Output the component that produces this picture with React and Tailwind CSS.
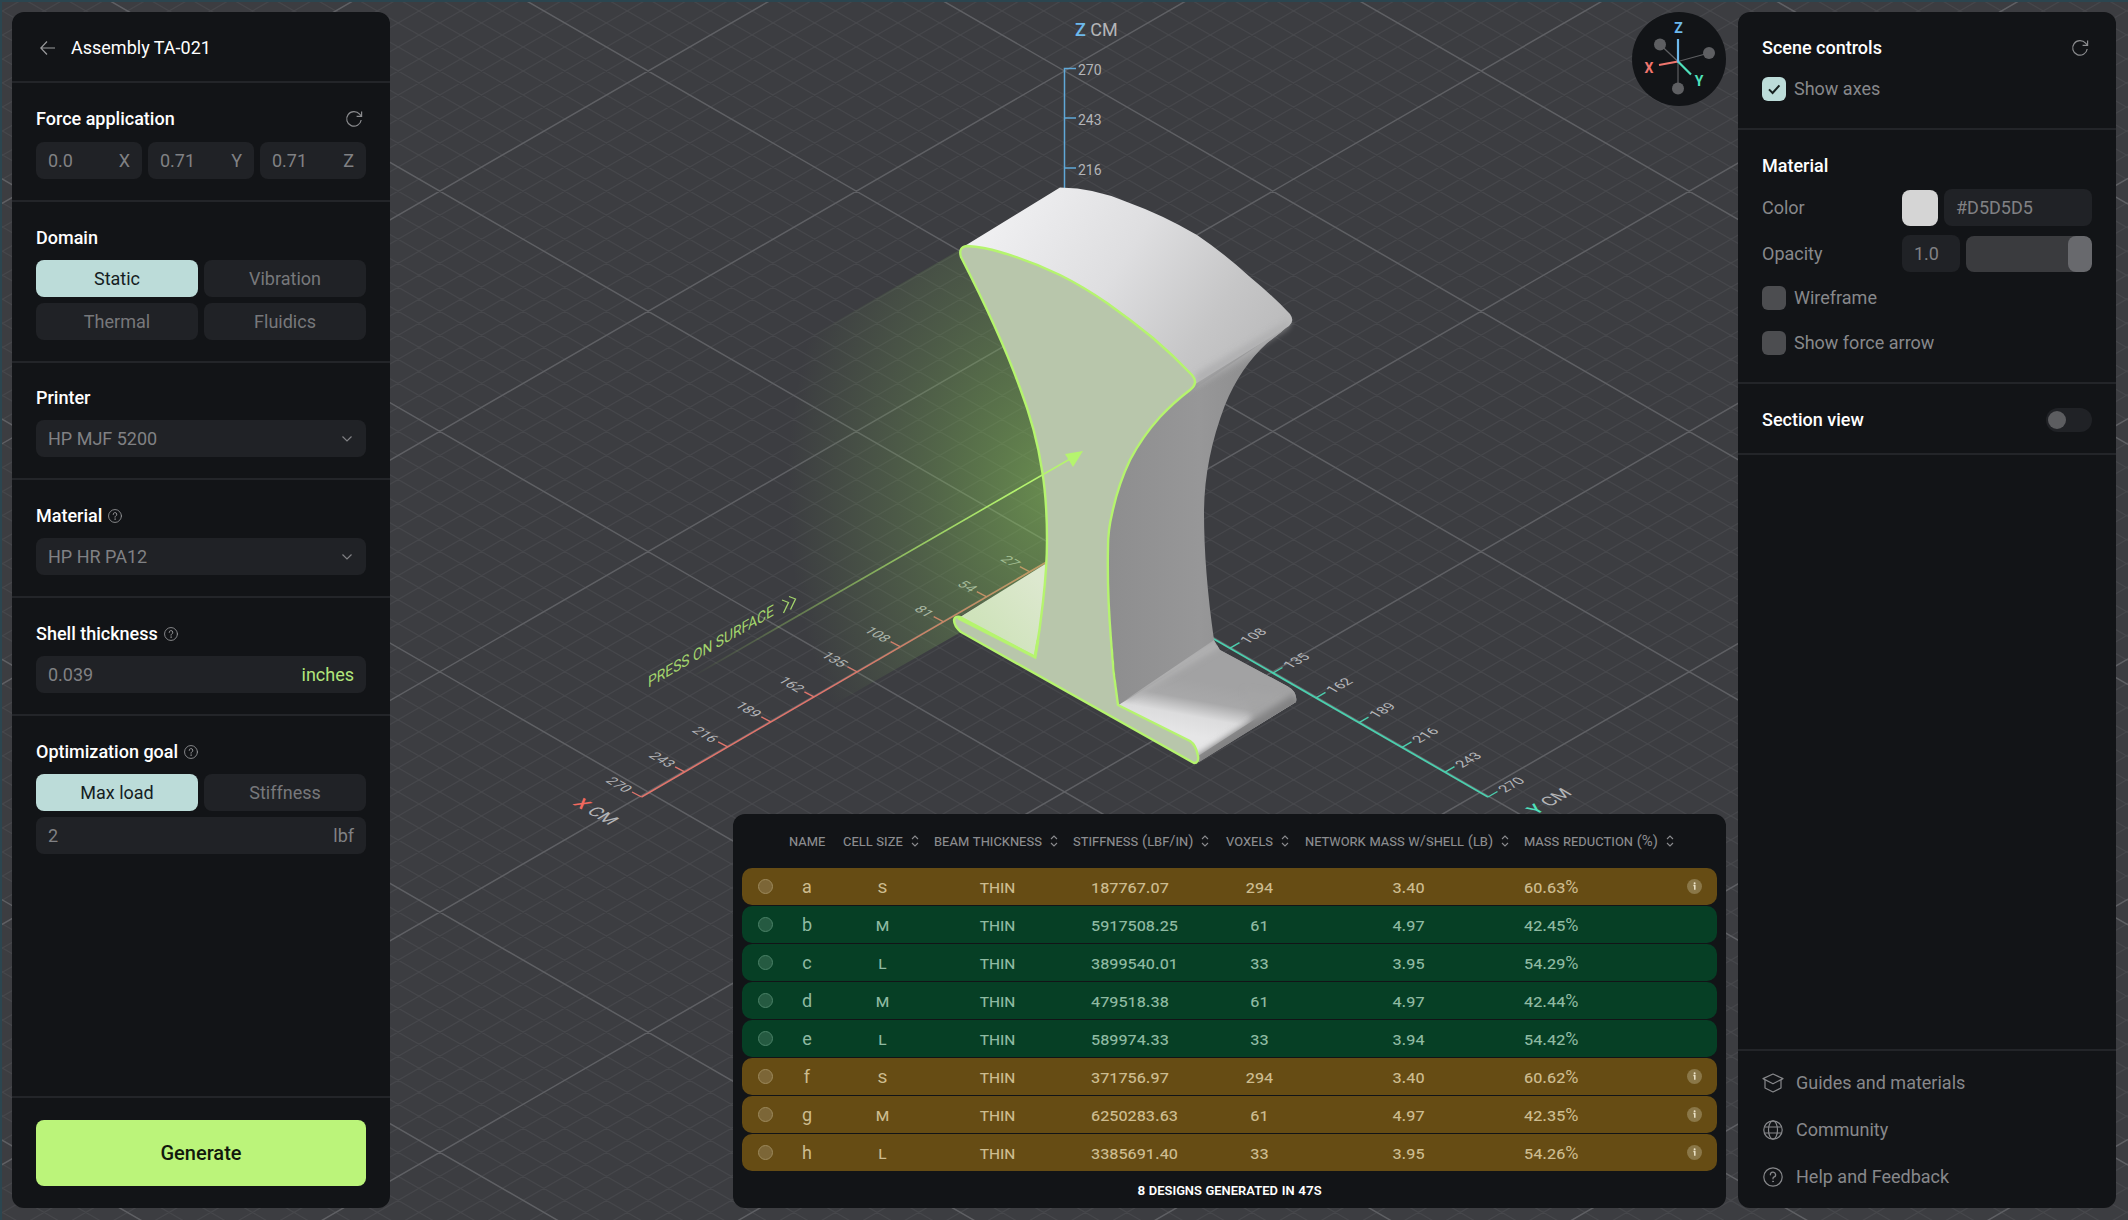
import React, { useState } from 'react';

const AXIS_STEPS = [27, 54, 81, 108, 135, 162, 189, 216, 243, 270];

const COLUMNS = [
  { label: 'Name', sortable: false },
  { label: 'Cell size', sortable: true },
  { label: 'Beam thickness', sortable: true },
  { label: 'Stiffness (lbf/in)', sortable: true },
  { label: 'Voxels', sortable: true },
  { label: 'Network mass w/shell (lb)', sortable: true },
  { label: 'Mass reduction (%)', sortable: true },
];

const DESIGNS = [
  { name: 'a', cell: 'S', beam: 'THIN', stiffness: '187767.07', voxels: 294, mass: '3.40', reduction: '60.63%', warn: true },
  { name: 'b', cell: 'M', beam: 'THIN', stiffness: '5917508.25', voxels: 61, mass: '4.97', reduction: '42.45%', warn: false },
  { name: 'c', cell: 'L', beam: 'THIN', stiffness: '3899540.01', voxels: 33, mass: '3.95', reduction: '54.29%', warn: false },
  { name: 'd', cell: 'M', beam: 'THIN', stiffness: '479518.38', voxels: 61, mass: '4.97', reduction: '42.44%', warn: false },
  { name: 'e', cell: 'L', beam: 'THIN', stiffness: '589974.33', voxels: 33, mass: '3.94', reduction: '54.42%', warn: false },
  { name: 'f', cell: 'S', beam: 'THIN', stiffness: '371756.97', voxels: 294, mass: '3.40', reduction: '60.62%', warn: true },
  { name: 'g', cell: 'M', beam: 'THIN', stiffness: '6250283.63', voxels: 61, mass: '4.97', reduction: '42.35%', warn: true },
  { name: 'h', cell: 'L', beam: 'THIN', stiffness: '3385691.40', voxels: 33, mass: '3.95', reduction: '54.26%', warn: true },
];

// Two families of parallel lines through (1064.5, 71), drawn as one path
function gridPath(spacing, skipEvery) {
  const slope = 0.577;
  let d = '';
  for (let i = -110; i < 110; i++) {
    if (skipEvery && i % skipEvery === 0) continue;
    const c = 71 + i * spacing;
    d += `M0 ${(c - 1064.5 * slope).toFixed(1)}L2128 ${(c + 1063.5 * slope).toFixed(1)}`;
    d += `M0 ${(c + 1064.5 * slope).toFixed(1)}L2128 ${(c - 1063.5 * slope).toFixed(1)}`;
  }
  return d;
}

const MAJOR_GRID = gridPath(240.3, 0);
const MINOR_GRID = gridPath(24.03, 10);

const FRONT_FACE =
  'M961 257Q958 247 967 246Q984 247 1000 252Q1031 261 1060 275Q1084 287 1107 303Q1131 320 1153 338Q1174 356 1192 375Q1199 383 1190 390' +
  'Q1174 402 1160 417Q1142 437 1130 460Q1118 485 1112 514Q1108 530 1108 547Q1107 590 1111 640Q1113 673 1118 705' +
  'L1190 741Q1196 745 1198 756Q1199 763 1194 763L961 632Q954 626 954 620Q955 616 960 617L1035 657Q1040 630 1043 602' +
  'Q1047 567 1047 540Q1047 500 1042 470Q1036 430 1020 388Q1000 333 961 257Z';

function RefreshIcon() {
  return (
    <svg width="18" height="18" viewBox="0 0 18 18" fill="none" stroke="currentColor" strokeWidth="1.2" aria-hidden="true">
      <path d="M16.2 10A7.3 7.3 0 1 1 14.6 4.2L16.6 6.4" />
      <path d="M16.6 1.4V6.4H11.6" />
    </svg>
  );
}

function HelpIcon({ className }) {
  return (
    <svg className={className} viewBox="0 0 20 20" fill="none" stroke="currentColor" strokeLinecap="round" aria-hidden="true">
      <circle cx="10" cy="10" r="9.2" strokeWidth="1.2" />
      <path d="M7.4 7.8A2.6 2.6 0 1 1 10.8 10.2Q10 10.6 10 11.8" strokeWidth="1.3" />
      <circle cx="10" cy="14.4" r="0.5" strokeWidth="0.8" fill="currentColor" />
    </svg>
  );
}

function SectionTitle({ children, help, action }) {
  return (
    <div className="flex items-center justify-between">
      <h2 className="flex items-center gap-1.5 text-lg/[22px] font-medium text-white">
        {children}
        {help && <HelpIcon className="w-3.5 h-3.5 text-[#9a9b9d]" />}
      </h2>
      {action}
    </div>
  );
}

function Field({ id, unit, unitClass, defaultValue, label }) {
  return (
    <div className="flex items-center h-[37px] px-3 rounded-lg bg-[#202226] min-w-0 flex-1">
      <input
        id={id}
        aria-label={label}
        defaultValue={defaultValue}
        className="w-full min-w-0 bg-transparent outline-none text-[#808184]"
      />
      {unit && <label htmlFor={id} className={unitClass || 'text-[#808184]'}>{unit}</label>}
    </div>
  );
}

function Select({ label, options }) {
  return (
    <div className="relative flex">
      <select aria-label={label} className="appearance-none w-full h-[37px] px-3 rounded-lg bg-[#202226] text-[#808184] outline-none">
        {options.map((o) => <option key={o}>{o}</option>)}
      </select>
      <svg className="absolute right-3.5 top-4 pointer-events-none text-[#808184]" width="10" height="6" viewBox="0 0 10 6" fill="none" stroke="currentColor" strokeWidth="1.2" aria-hidden="true">
        <path d="M0.5 0.5L5 5L9.5 0.5" />
      </svg>
    </div>
  );
}

function Segmented({ options, value, onChange }) {
  return (
    <div className="grid grid-cols-2 gap-1.5">
      {options.map((o) => (
        <button
          key={o}
          type="button"
          aria-pressed={value === o}
          onClick={() => onChange(o)}
          className={`h-[37px] rounded-lg ${value === o ? 'bg-[#bcdcd9] text-[#14201f]' : 'bg-[#202226] text-[#77787b]'}`}
        >
          {o}
        </button>
      ))}
    </div>
  );
}

function Checkbox({ label, checked }) {
  return (
    <label className="flex items-center gap-2 h-6 text-[#87888b]">
      <span className="relative flex">
        <input type="checkbox" defaultChecked={checked} className="peer appearance-none w-6 h-6 rounded-md bg-[#4c4d50] checked:bg-[#bcdcd9]" />
        <svg className="absolute inset-0 hidden peer-checked:block pointer-events-none" width="24" height="24" viewBox="0 0 24 24" fill="none" stroke="#16201f" strokeWidth="2" aria-hidden="true">
          <path d="M7 12.4L10.6 16L17.4 8.4" />
        </svg>
      </span>
      {label}
    </label>
  );
}

function Scene() {
  return (
    <div className="absolute inset-0 border-t-2 border-l-2 border-[#2b4650] overflow-hidden">
      <svg className="w-full h-full" viewBox="2 2 2126 1218" preserveAspectRatio="xMidYMid slice" role="img" aria-label="Part preview">
        <defs>
          <linearGradient id="topFace" x1="1000" y1="200" x2="1250" y2="370" gradientUnits="userSpaceOnUse">
            <stop offset="0" stopColor="#f0f0f2" />
            <stop offset="0.45" stopColor="#dedee0" />
            <stop offset="0.8" stopColor="#c6c6c7" />
            <stop offset="1" stopColor="#bcbcbd" />
          </linearGradient>
          <linearGradient id="sideFace" x1="1105" y1="0" x2="1295" y2="0" gradientUnits="userSpaceOnUse">
            <stop offset="0" stopColor="#8d8d8e" />
            <stop offset="0.5" stopColor="#979798" />
            <stop offset="0.75" stopColor="#8f8f90" />
            <stop offset="1" stopColor="#a9a9aa" />
          </linearGradient>
          <linearGradient id="lip" x1="1232" y1="342" x2="1246" y2="368" gradientUnits="userSpaceOnUse">
            <stop offset="0" stopColor="#c2c2c3" />
            <stop offset="0.6" stopColor="#a6a6a7" />
            <stop offset="1" stopColor="#969697" stopOpacity="0" />
          </linearGradient>
          <linearGradient id="foot" x1="1204" y1="682" x2="1194" y2="736" gradientUnits="userSpaceOnUse">
            <stop offset="0" stopColor="#a2a2a3" />
            <stop offset="0.35" stopColor="#a8a8a9" />
            <stop offset="0.65" stopColor="#dcdcdd" />
            <stop offset="1" stopColor="#e6e6e7" />
          </linearGradient>
          <linearGradient id="footLeft" x1="1040" y1="580" x2="985" y2="630" gradientUnits="userSpaceOnUse">
            <stop offset="0" stopColor="#dde8cf" />
            <stop offset="1" stopColor="#cfe3bb" />
          </linearGradient>
          <radialGradient id="glow" cx="0" cy="0" r="1" gradientUnits="userSpaceOnUse" gradientTransform="translate(1052 490) scale(265 390)">
            <stop offset="0" stopColor="#92d65c" stopOpacity="0.52" />
            <stop offset="0.35" stopColor="#8acb5a" stopOpacity="0.34" />
            <stop offset="0.7" stopColor="#7fb25c" stopOpacity="0.18" />
            <stop offset="1" stopColor="#7fb25c" stopOpacity="0" />
          </radialGradient>
          <linearGradient id="force" x1="690" y1="678" x2="1020" y2="488" gradientUnits="userSpaceOnUse">
            <stop offset="0" stopColor="#b5f46e" stopOpacity="0" />
            <stop offset="1" stopColor="#b5f46e" />
          </linearGradient>
          <filter id="soft" x="-20%" y="-20%" width="140%" height="140%">
            <feGaussianBlur stdDeviation="3" />
          </filter>
          <clipPath id="footClip">
            <path d="M1118 705L1214 640L1220 650L1287 686Q1298 692 1296 702L1199 762Q1197 744 1190 741Z" />
          </clipPath>
        </defs>

        <rect width="2128" height="1220" fill="#3c3d41" />
        <path d={MINOR_GRID} stroke="#46474b" strokeWidth="1.3" fill="none" />
        <path d={MAJOR_GRID} stroke="#5f6064" strokeWidth="1.5" fill="none" />

        {/* Z axis */}
        <path d="M1076 68.5H1064.5V190M1064.5 118H1076M1064.5 168H1076" stroke="#5fa8d8" strokeWidth="1.5" fill="none" />
        <g fill="#b4b5b8" fontSize="14" dominantBaseline="central">
          <text x="1078" y="69.5">270</text>
          <text x="1078" y="119.5">243</text>
          <text x="1078" y="169.5">216</text>
        </g>
        <text x="1075" y="36" fontSize="18" fill="#b4b5b8">
          <tspan fill="#6db9ec" fontWeight="500">Z</tspan> CM
        </text>

        {/* X axis */}
        <path d="M641.5 797L1050 560" stroke="#e0756c" strokeWidth="1.6" />
        {AXIS_STEPS.map((v, i) => {
          const x = 641.5 + 43.1 * (9 - i);
          const y = 797 - 25.05 * (9 - i);
          return (
            <g key={v}>
              <path d={`M${x} ${y}l-9.5 -5`} stroke="#e0756c" strokeWidth="1.4" />
              <text transform={`matrix(.866 .5 -.866 .5 ${x - 12} ${y - 6.5})`} textAnchor="end" dominantBaseline="central" fontSize="14" fill="#b4b5b8">{v}</text>
            </g>
          );
        })}
        <text transform="matrix(.866 .5 -.866 .5 572 804)" fontSize="18" fill="#b4b5b8">
          <tspan fill="#f0695e" fontWeight="500">X</tspan> CM
        </text>

        {/* Y axis */}
        <path d="M1200 631L1488 797" stroke="#4ccfae" strokeWidth="1.8" />
        {AXIS_STEPS.slice(3).map((v, i) => {
          const x = 1488 - 43 * (6 - i);
          const y = 797 - 24.8 * (6 - i);
          return (
            <g key={v}>
              <path d={`M${x} ${y}l9.5 -5.5`} stroke="#4ccfae" strokeWidth="1.4" />
              <text transform={`matrix(.866 -.5 .866 .5 ${x + 13} ${y - 6.5})`} dominantBaseline="central" fontSize="14" fill="#b4b5b8">{v}</text>
            </g>
          );
        })}
        <text transform="matrix(.866 -.5 .866 .5 1536 815)" fontSize="18" fill="#b4b5b8">
          <tspan fill="#4fe0bb" fontWeight="500">Y</tspan> CM
        </text>

        {/* Pressure glow */}
        <path d="M961 249L780 354V735L961 632L954 620L1048 564Q1047 500 1042 470Q1036 430 1020 388Q1000 333 961 257Z" fill="url(#glow)" />

        {/* Part */}
        <path d="M960 617L1050 561L1035 657Z" fill="url(#footLeft)" />
        <path d="M1150 380L1291 323Q1281 333 1267 343Q1240 368 1225 405Q1204 460 1204 513Q1204 570 1214 640Q1216 648 1220 650L1287 686Q1298 692 1296 702L1199 762L1118 705L1100 520Z" fill="url(#sideFace)" />
        <path d="M1190 392L1291 323Q1281 333 1267 343Q1247 361 1236 382L1180 412Z" fill="url(#lip)" />
        <g clipPath="url(#footClip)">
          <path d="M1110 710L1217 645L1300 690L1192 760Z" fill="url(#foot)" />
          <path d="M1125 696L1222 640" stroke="#b2b2b3" strokeWidth="10" filter="url(#soft)" />
          <path d="M1245 690L1305 700L1255 730Z" fill="#a4a4a5" filter="url(#soft)" />
          <path d="M1201 766L1300 703" stroke="#828283" strokeWidth="22" filter="url(#soft)" />
        </g>
        <path d="M1060 187.5Q1095 188 1127 202Q1163 215 1197 235Q1225 254 1250 277Q1273 296 1290 314Q1295 321 1289 326L1192 386L1150 340L1000 260L963 247Z" fill="url(#topFace)" />
        <path d="M1196 374L1291 319L1288 328L1194 388Z" fill="#a9a9aa" filter="url(#soft)" opacity="0.7" />
        <path d={FRONT_FACE} fill="#b8c6ab" stroke="#b5f46e" strokeWidth="2.4" strokeLinejoin="round" />
        <path d="M958 618L1035 657L1038 640" stroke="#b5f46e" strokeWidth="3" fill="none" />

        {/* Applied force */}
        <path d="M690 678L1070 459" stroke="url(#force)" strokeWidth="1.6" />
        <path d="M1083 451L1065 454L1073 467Z" fill="#b5f46e" />
        <text transform="matrix(.866 -.5 0 1 648 688)" fontSize="16" fill="#a3d46c">PRESS ON SURFACE</text>
        <path d="M782 600L788.5 602.5L783.5 613M789 596.5L795.5 599L790.5 609.5" stroke="#a3d46c" strokeWidth="1.3" fill="none" />
      </svg>
    </div>
  );
}

function Gizmo() {
  return (
    <svg className="w-[94px] h-[94px]" viewBox="0 0 94 94" role="img" aria-label="View orientation">
      <circle cx="47" cy="47" r="47" fill="#121417" />
      <path d="M46 49.5L28 32.5M46 49.5L77 41M46 49.5V76" stroke="#5e5f62" strokeWidth="1.2" />
      <g fill="#5e5f62">
        <circle cx="28" cy="32.5" r="6" />
        <circle cx="77" cy="41" r="6" />
        <circle cx="46" cy="76.5" r="6" />
      </g>
      <path d="M46 49.5L27 53" stroke="#f0766e" strokeWidth="2.2" />
      <path d="M46 49.5L59 62.5" stroke="#4fe0bb" strokeWidth="2.2" />
      <path d="M46 50.5V27" stroke="#6db9ec" strokeWidth="2.2" />
      <g fontSize="14" fontWeight="700" textAnchor="middle">
        <text x="46.5" y="21" fill="#6db9ec">Z</text>
        <text x="17" y="61" fill="#f0766e">X</text>
        <text x="67" y="74" fill="#4fe0bb">Y</text>
      </g>
    </svg>
  );
}

function SortIcon() {
  return (
    <svg width="8" height="12" viewBox="0 0 8 12" fill="none" stroke="currentColor" strokeWidth="1.1" aria-hidden="true">
      <path d="M1 4L4 1L7 4M1 8L4 11L7 8" />
    </svg>
  );
}

function Results() {
  return (
    <section className="w-3/4 px-[9px] rounded-xl bg-[#121417]">
      <table className="w-full table-fixed border-separate border-spacing-x-0 border-spacing-y-px">
        <colgroup>
          <col className="w-[47px]" />
          <col className="w-[54px]" />
          <col className="w-[91px]" />
          <col className="w-[139px]" />
          <col className="w-[153px]" />
          <col className="w-[79px]" />
          <col className="w-[219px]" />
          <col />
          <col className="w-[44px]" />
        </colgroup>
        <thead>
          <tr className="h-[52px] text-[15px] text-[#8b8c8f] whitespace-nowrap">
            <td />
            {COLUMNS.map((c) => (
              <th key={c.label} scope="col" className="p-0 text-left font-normal [font-variant-caps:all-small-caps]">
                {c.sortable ? (
                  <button type="button" className="flex items-center gap-2 [font-variant-caps:all-small-caps]">
                    {c.label}
                    <SortIcon />
                  </button>
                ) : c.label}
              </th>
            ))}
            <td />
          </tr>
        </thead>
        <tbody>
          {DESIGNS.map((d) => (
            <tr
              key={d.name}
              className={`h-[37px] text-center text-lg/6 ${d.warn ? 'bg-[#664c14] text-[#cdbc8f]' : 'bg-[#063f25] text-[#8fbaa2]'}`}
            >
              <td className="p-0 pl-4 rounded-l-[10px]">
                <input
                  type="radio"
                  name="design"
                  aria-label={`Design ${d.name}`}
                  className={`block appearance-none w-[15px] h-[15px] rounded-full border ${d.warn ? 'bg-[#7c6637] border-[#9c895c]' : 'bg-[#255a41] border-[#4a8167]'}`}
                />
              </td>
              <td className="p-0 pr-[18px]">{d.name}</td>
              <td className="p-0 pr-3 [font-variant-caps:all-small-caps]">{d.cell}</td>
              <td className="p-0 pr-3 [font-variant-caps:all-small-caps]">{d.beam}</td>
              <td className="p-0 pl-[18px] text-left [font-variant-caps:all-small-caps]">{d.stiffness}</td>
              <td className="p-0 pr-3 [font-variant-caps:all-small-caps]">{d.voxels}</td>
              <td className="p-0 pr-3 [font-variant-caps:all-small-caps]">{d.mass}</td>
              <td className="p-0 text-left [font-variant-caps:all-small-caps]">{d.reduction}</td>
              <td className="p-0 rounded-r-[10px]">
                {d.warn && (
                  <button type="button" aria-label="Design details" className="block ml-3.5">
                    <svg width="15" height="15" viewBox="0 0 15 15" aria-hidden="true">
                      <circle cx="7.5" cy="7.5" r="7.5" fill="#8a7748" />
                      <path d="M6.4 6.6H7.8V10.8" stroke="#ece3c8" strokeWidth="1.5" fill="none" />
                      <circle cx="7.6" cy="4.3" r="1" fill="#ece3c8" />
                    </svg>
                  </button>
                )}
              </td>
            </tr>
          ))}
        </tbody>
      </table>
      <p className="h-9 flex items-center justify-center text-[15px] font-medium text-white [font-variant-caps:all-small-caps]">
        8 designs generated in 47s
      </p>
    </section>
  );
}

export default function App() {
  const [domain, setDomain] = useState('Static');
  const [goal, setGoal] = useState('Max load');

  return (
    <div
      className="relative h-screen min-h-[960px] flex gap-3 p-3 bg-[#3c3d41] text-lg/6"
      style={{ fontFamily: 'Roboto, "Liberation Sans", sans-serif' }}
    >
      <Scene />

      {/* Design settings */}
      <aside className="relative w-[378px] shrink-0 flex flex-col rounded-xl bg-[#121417]">
        <header className="h-[71px] pt-0.5 pl-7 flex items-center gap-4 border-b-2 border-[#232529]">
          <a href="#" aria-label="Back" className="text-[#9a9b9d]">
            <svg width="15" height="14" viewBox="0 0 15 14" fill="none" stroke="currentColor" strokeWidth="1.2" aria-hidden="true">
              <path d="M15 7H1M7 0.5L0.8 7L7 13.5" />
            </svg>
          </a>
          <h1 className="text-white">Assembly TA-021</h1>
        </header>

        <section className="px-6 pt-6 pb-[21px] border-b-2 border-[#232529] flex flex-col gap-[11px]">
          <SectionTitle
            action={<button type="button" aria-label="Reset force" className="h-6 w-6 flex items-center justify-center text-[#8b8c8f]"><RefreshIcon /></button>}
          >
            Force application
          </SectionTitle>
          <div className="flex gap-1.5">
            <Field id="force-x" unit="X" defaultValue="0.0" />
            <Field id="force-y" unit="Y" defaultValue="0.71" />
            <Field id="force-z" unit="Z" defaultValue="0.71" />
          </div>
        </section>

        <section className="px-6 pt-[25px] pb-[21px] border-b-2 border-[#232529] flex flex-col gap-[11px]">
          <SectionTitle>Domain</SectionTitle>
          <Segmented options={['Static', 'Vibration', 'Thermal', 'Fluidics']} value={domain} onChange={setDomain} />
        </section>

        <section className="px-6 pt-6 pb-[21px] border-b-2 border-[#232529] flex flex-col gap-[11px]">
          <SectionTitle>Printer</SectionTitle>
          <Select label="Printer" options={['HP MJF 5200']} />
        </section>

        <section className="px-6 pt-[25px] pb-[21px] border-b-2 border-[#232529] flex flex-col gap-[11px]">
          <SectionTitle help>Material</SectionTitle>
          <Select label="Material" options={['HP HR PA12']} />
        </section>

        <section className="px-6 pt-[25px] pb-[21px] border-b-2 border-[#232529] flex flex-col gap-[11px]">
          <SectionTitle help>Shell thickness</SectionTitle>
          <div className="flex">
            <Field id="shell" label="Shell thickness" unit="inches" unitClass="text-[#b2e67c]" defaultValue="0.039" />
          </div>
        </section>

        <section className="px-6 pt-[25px] flex flex-col gap-[11px]">
          <SectionTitle help>Optimization goal</SectionTitle>
          <div className="flex flex-col gap-1.5">
            <Segmented options={['Max load', 'Stiffness']} value={goal} onChange={setGoal} />
            <div className="flex">
              <Field id="goal" label="Load" unit="lbf" defaultValue="2" />
            </div>
          </div>
        </section>

        <div className="mt-auto px-6 py-[22px] border-t-2 border-[#232529]">
          <button type="button" className="w-full h-[66px] rounded-lg bg-[#bbf47a] text-xl font-medium text-[#12180c]">
            Generate
          </button>
        </div>
      </aside>

      {/* Viewport overlays */}
      <main className="relative flex-1 min-w-0 flex flex-col items-end justify-between">
        <Gizmo />
        <Results />
      </main>

      {/* Scene settings */}
      <aside className="relative w-[378px] shrink-0 flex flex-col rounded-xl bg-[#121417]">
        <section className="px-6 pt-6 pb-[27px] border-b-2 border-[#232529] flex flex-col gap-[17px]">
          <SectionTitle
            action={<button type="button" aria-label="Reset scene" className="h-6 w-6 flex items-center justify-center text-[#8b8c8f]"><RefreshIcon /></button>}
          >
            Scene controls
          </SectionTitle>
          <Checkbox label="Show axes" checked />
        </section>

        <section className="px-6 pt-[25px] pb-[27px] border-b-2 border-[#232529]">
          <SectionTitle>Material</SectionTitle>
          <div className="mt-3 flex items-center gap-1.5 text-[#87888b]">
            <label htmlFor="color" className="flex-1">Color</label>
            <input
              type="color"
              id="color"
              defaultValue="#d5d5d5"
              className="appearance-none w-9 h-9 p-0 rounded-lg overflow-hidden bg-[#d5d5d5] [&::-webkit-color-swatch-wrapper]:p-0 [&::-webkit-color-swatch]:border-0"
            />
            <div className="flex w-[148px]">
              <Field id="hex" label="Color value" defaultValue="#D5D5D5" />
            </div>
          </div>
          <div className="mt-[9px] flex items-center gap-1.5 text-[#87888b]">
            <label htmlFor="opacity" className="flex-1">Opacity</label>
            <div className="flex w-[58px]">
              <Field id="opacity" defaultValue="1.0" />
            </div>
            <input
              type="range"
              min="0"
              max="100"
              defaultValue="100"
              aria-label="Opacity slider"
              className="appearance-none w-[126px] h-9 rounded-lg bg-[#3a3b3e] overflow-hidden [&::-webkit-slider-thumb]:appearance-none [&::-webkit-slider-thumb]:w-6 [&::-webkit-slider-thumb]:h-9 [&::-webkit-slider-thumb]:rounded-lg [&::-webkit-slider-thumb]:bg-[#68696d]"
            />
          </div>
          <div className="mt-3.5 flex flex-col gap-[21px]">
            <Checkbox label="Wireframe" />
            <Checkbox label="Show force arrow" />
          </div>
        </section>

        <section className="px-6 pt-6 pb-[21px] border-b-2 border-[#232529] flex items-center justify-between">
          <label htmlFor="section-view" className="font-medium text-white">Section view</label>
          <input
            type="checkbox"
            role="switch"
            id="section-view"
            className="appearance-none flex items-center w-[46px] h-6 px-0.5 rounded-full bg-[#202226] before:w-[18px] before:h-[18px] before:rounded-full before:bg-[#5c5d60] checked:justify-end"
          />
        </section>

        <nav className="mt-auto px-6 py-2 border-t-2 border-[#232529] text-[#87888b]">
          <a href="#" className="h-[47px] flex items-center gap-3">
            <svg width="22" height="20" viewBox="0 0 22 20" fill="none" stroke="currentColor" strokeWidth="1.2" strokeLinejoin="round" aria-hidden="true">
              <path d="M11 1L21 5.6L11 10.8L1 5.6Z" />
              <path d="M3 7V15L11 19L19 15V7" />
            </svg>
            Guides and materials
          </a>
          <a href="#" className="h-[47px] flex items-center gap-3">
            <svg width="22" height="20" viewBox="0 0 22 20" fill="none" stroke="currentColor" strokeWidth="1.2" aria-hidden="true">
              <circle cx="11" cy="10" r="9.2" />
              <ellipse cx="11" cy="10" rx="4.5" ry="9.2" />
              <path d="M2.5 7H19.5M2.5 13H19.5" />
            </svg>
            Community
          </a>
          <a href="#" className="h-[47px] flex items-center gap-3">
            <HelpIcon className="w-[22px] h-5" />
            Help and Feedback
          </a>
        </nav>
      </aside>
    </div>
  );
}
